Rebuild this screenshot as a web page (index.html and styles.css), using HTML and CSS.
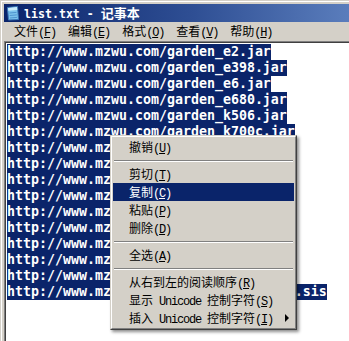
FILE: index.html
```html
<!DOCTYPE html>
<html>
<head>
<meta charset="utf-8">
<link rel="stylesheet" href="styles.css">
</head>
<body>
<div class="win">
  <div class="titlebar">
    <svg class="ico" width="16" height="16" viewBox="0 0 16 16">
      <polygon points="2.5,2.5 12.5,1.5 13.5,14.5 3.5,15" fill="#7cc3ec" stroke="#3b78b8" stroke-width="1"/>
      <polygon points="3,3 12,2 12.3,5 3.3,5.8" fill="#c9ecfb"/>
      <line x1="4.5" y1="8" x2="11.5" y2="7.4" stroke="#4f95d0" stroke-width="1"/>
      <line x1="4.7" y1="10.5" x2="11.8" y2="9.9" stroke="#4f95d0" stroke-width="1"/>
      <line x1="4.9" y1="13" x2="12" y2="12.4" stroke="#4f95d0" stroke-width="1"/>
    </svg>
    <span class="title">list.txt - <span class="title-cjk">记事本</span></span>
  </div>
  <div class="menubar">
    <span class="mb">文件<span class="lat">(<u>F</u>)</span></span>
    <span class="mb">编辑<span class="lat">(<u>E</u>)</span></span>
    <span class="mb">格式<span class="lat">(<u>O</u>)</span></span>
    <span class="mb">查看<span class="lat">(<u>V</u>)</span></span>
    <span class="mb">帮助<span class="lat">(<u>H</u>)</span></span>
  </div>
  <div class="edit">
    <div class="ln">http://www.mzwu.com/garden_e2.jar</div>
    <div class="ln">http://www.mzwu.com/garden_e398.jar</div>
    <div class="ln">http://www.mzwu.com/garden_e6.jar</div>
    <div class="ln">http://www.mzwu.com/garden_e680.jar</div>
    <div class="ln">http://www.mzwu.com/garden_k506.jar</div>
    <div class="ln">http://www.mzwu.com/garden_k700c.jar</div>
    <div class="ln">http://www.mzwu.com/garden_k750.jar</div>
    <div class="ln">http://www.mzwu.com/garden_n70.jar</div>
    <div class="ln">http://www.mzwu.com/garden_n73.jar</div>
    <div class="ln">http://www.mzwu.com/garden_s60.jar</div>
    <div class="ln">http://www.mzwu.com/garden_w550.jar</div>
    <div class="ln">http://www.mzwu.com/garden_w800.jar</div>
    <div class="ln">http://www.mzwu.com/garden_6600.jar</div>
    <div class="ln">http://www.mzwu.com/garden_6630.jar</div>
    <div class="ln">http://www.mzwu.com/garden_e2.sis</div>
    <div class="ln">http://www.mzwu.com/garden_n70_s60v2.sis</div>
  </div>
  <div class="ctx">
    <div class="ctx-in">
      <div class="mi">撤销<span class="lat">(<u>U</u>)</span></div>
      <div class="sep"></div>
      <div class="mi">剪切<span class="lat">(<u>T</u>)</span></div>
      <div class="mi sel">复制<span class="lat">(<u>C</u>)</span></div>
      <div class="mi">粘贴<span class="lat">(<u>P</u>)</span></div>
      <div class="mi">删除<span class="lat">(<u>D</u>)</span></div>
      <div class="sep"></div>
      <div class="mi">全选<span class="lat">(<u>A</u>)</span></div>
      <div class="sep"></div>
      <div class="mi">从右到左的阅读顺序<span class="lat">(<u>R</u>)</span></div>
      <div class="mi">显示<span class="lat"> Unicode </span>控制字符<span class="lat">(<u>S</u>)</span></div>
      <div class="mi">插入<span class="lat"> Unicode </span>控制字符<span class="lat">(<u>I</u>)</span><span class="arrow"></span></div>
    </div>
  </div>
</div>
</body>
</html>
```
FILE: styles.css
```css
html, body {
  margin: 0;
  padding: 0;
  background: #ffffff;
}
body {
  font-family: "Noto Sans CJK SC", sans-serif;
  font-size: 12px;
  color: #000;
}
.win {
  position: relative;
  width: 349px;
  height: 341px;
  overflow: hidden;
  box-sizing: border-box;
  padding: 4px 0 0 4px;
  background: #d4d0c8;
  box-shadow: inset 1px 1px 0 #d4d0c8, inset 2px 2px 0 #ffffff;
  display: flex;
  flex-direction: column;
}
.titlebar {
  height: 18px;
  flex: none;
  display: flex;
  align-items: center;
  padding-left: 1px;
  background: linear-gradient(to right, #0a246a 0%, #2f4f94 55%, #5a7dbc 100%);
  color: #fff;
}
.ico {
  display: block;
  flex: none;
}
.title {
  margin-left: 3px;
  font-family: "DejaVu Sans Mono", monospace;
  font-weight: bold;
  font-size: 11.6px;
  white-space: pre;
  line-height: 18px;
}
.title-cjk {
  font-family: "Noto Sans CJK SC", sans-serif;
  font-size: 13px;
  font-weight: bold;
}
.menubar {
  height: 19px;
  flex: none;
  display: flex;
  align-items: center;
  padding-left: 4px;
}
.mb {
  padding: 0 6px;
  line-height: 19px;
  white-space: pre;
}
.lat {
  font-family: "Liberation Mono", monospace;
  font-size: 12px;
  letter-spacing: -1.2px;
  white-space: pre;
}
.edit {
  flex: 1;
  background: #fff;
  border-top: 1px solid #808080;
  border-left: 1px solid #808080;
  box-shadow: inset 1px 1px 0 #404040;
  padding: 2px 0 0 2px;
  font-family: "DejaVu Sans Mono", monospace;
  font-weight: bold;
  font-size: 13.29px;
}
.ln {
  width: max-content;
  height: 16px;
  line-height: 16px;
  background: #0a246a;
  color: #fff;
  white-space: pre;
}
.ctx {
  position: absolute;
  left: 110px;
  top: 135px;
  width: 187px;
  box-sizing: border-box;
  background: #d4d0c8;
  border: 1px solid;
  border-color: #d4d0c8 #404040 #404040 #d4d0c8;
  box-shadow: 2px 2px 3px rgba(0, 0, 0, 0.45);
}
.ctx-in {
  border: 1px solid;
  border-color: #ffffff #808080 #808080 #ffffff;
  padding: 1px;
}
.mi {
  position: relative;
  height: 18px;
  line-height: 18px;
  padding-left: 16px;
  white-space: pre;
}
.mi.sel {
  background: #0a246a;
  color: #fff;
}
.sep {
  height: 0;
  margin: 4px 1px 3px 1px;
  border-top: 1px solid #808080;
  border-bottom: 1px solid #ffffff;
}
.arrow {
  position: absolute;
  right: 5px;
  top: 5px;
  width: 0;
  height: 0;
  border-left: 4px solid #000;
  border-top: 4px solid transparent;
  border-bottom: 4px solid transparent;
}
```
